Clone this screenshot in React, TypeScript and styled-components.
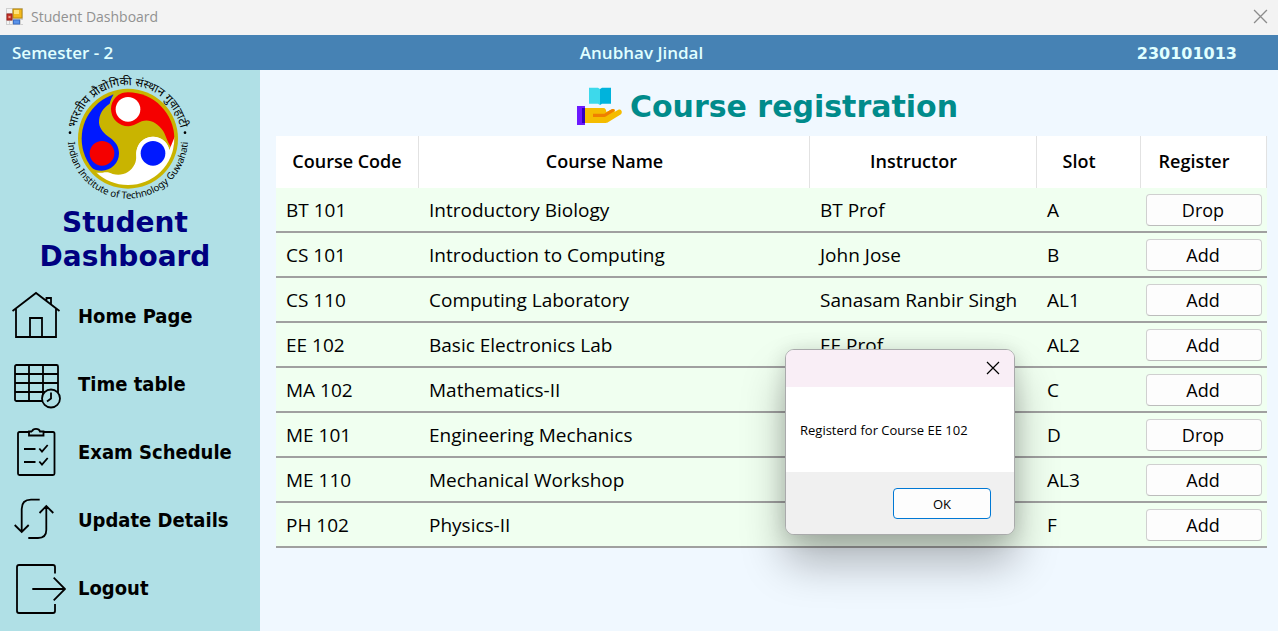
import React from "react";
import styled, { createGlobalStyle } from "styled-components";

const humanist = '"Open Sans", "Noto Sans", sans-serif';
const wide = '"DejaVu Sans", Verdana, sans-serif';
const compact = '"DejaVu Sans Condensed", Tahoma, sans-serif';

const GlobalStyle = createGlobalStyle`
  *, *::before, *::after { box-sizing: border-box; }
  body { margin: 0; font-family: ${humanist}; color: #000; background: #f0f8ff; }
  button { font-family: inherit; color: inherit; cursor: pointer; }
  h1, h2, p { margin: 0; }
`;

const Window = styled.div`
  position: relative;
  display: flex;
  flex-direction: column;
  min-height: 100vh;
`;

const TitleBar = styled.div`
  display: flex;
  align-items: center;
  gap: 8px;
  height: 35px;
  padding: 0 10px 3px 6px;
  background: #f3f3f3;
  color: #919191;
  font-size: 14px;
`;

const WindowTitle = styled.span`
  flex: 1;
`;

const CloseButton = styled.button`
  display: flex;
  padding: 0;
  border: 0;
  background: none;
`;

const InfoBar = styled.header`
  display: grid;
  grid-template-columns: 1fr auto 1fr;
  align-items: center;
  height: 35px;
  padding: 0 41px 0 12px;
  background: #4682b4;
  color: #e0ffff;
  font-size: 17px;
  font-weight: 600;
`;

const StudentName = styled.span`
  padding-left: 34px;
`;

const RollNumber = styled.span`
  justify-self: end;
  padding-top: 1px;
  font-family: ${wide};
  font-size: 16px;
  font-weight: 700;
`;

const Body = styled.div`
  display: flex;
  flex: 1;
`;

const Sidebar = styled.aside`
  flex: none;
  width: 260px;
  background: #b0e0e6;
`;

const Brand = styled.div`
  display: flex;
  flex-direction: column;
  align-items: center;
  gap: 4px;
  padding-right: 10px;
`;

const BrandTitle = styled.h1`
  color: #000080;
  font-family: ${wide};
  font-size: 28px;
  line-height: 34px;
  text-align: center;
`;

const Nav = styled.nav`
  display: flex;
  flex-direction: column;
  padding-top: 8px;
`;

const NavButton = styled.button`
  display: flex;
  align-items: center;
  gap: 12px;
  height: 68px;
  padding: 0 0 0 12px;
  border: 0;
  background: none;
  font-family: ${compact};
  font-size: 20px;
  font-weight: 700;
  text-align: left;
`;

const Main = styled.main`
  flex: 1;
  min-width: 0;
  padding: 16px 11px 40px 16px;
  background: #f0f8ff;
`;

const Heading = styled.h2`
  display: flex;
  align-items: center;
  justify-content: center;
  gap: 7px;
  height: 50px;
  padding: 0 8px 10px 0;
  color: #008b8b;
  font-family: ${wide};
  font-size: 30px;
`;

const Table = styled.table`
  width: 100%;
  table-layout: fixed;
  border-collapse: separate;
  border-spacing: 0;
`;

const Column = styled.col<{ $width?: number }>`
  width: ${(p) => (p.$width ? `${p.$width}px` : "auto")};
`;

const HeadCell = styled.th`
  height: 52px;
  padding: 0 0 2px;
  border-right: 1px solid #e2e2e2;
  background: #fff;
  font-size: 18px;
  font-weight: 600;
  & + & { padding-right: 19px; }
`;

const Cell = styled.td`
  height: 45px;
  padding: 0 0 0 10px;
  border-bottom: 2px solid #a0a0a0;
  background: #f0fff0;
  font-size: 19px;
  line-height: 24px;
  white-space: nowrap;
`;

const ActionCell = styled(Cell)`
  padding: 0 5px;
`;

const ActionButton = styled.button`
  display: block;
  width: 100%;
  height: 32px;
  padding: 0 2px 0 0;
  border: 1px solid #d0d0d0;
  border-bottom-color: #bcbcbc;
  border-radius: 4px;
  background: #fdfdfd;
  font-size: 18px;
  line-height: 24px;
`;

const Dialog = styled.div`
  position: absolute;
  top: 349px;
  left: 785px;
  width: 230px;
  overflow: hidden;
  border: 1px solid #a9aaab;
  border-radius: 9px;
  background: #fff;
  box-shadow: 0 28px 44px rgba(0, 0, 0, 0.28), 0 2px 20px rgba(0, 0, 0, 0.14);
  font-size: 13px;
`;

const DialogTitle = styled.div`
  display: flex;
  align-items: center;
  justify-content: flex-end;
  height: 37px;
  padding: 0 14px 1px 0;
  background: #f9eef6;
`;

const DialogText = styled.p`
  height: 85px;
  padding: 0 14px;
  line-height: 87px;
  white-space: nowrap;
`;

const DialogFooter = styled.div`
  display: flex;
  justify-content: flex-end;
  padding: 16px 23px 15px;
  background: #f0f0f0;
`;

const OkButton = styled.button`
  width: 98px;
  height: 31px;
  border: 1px solid #0078d4;
  border-radius: 4px;
  background: #fdfdfd;
  font-size: 13px;
`;

const FormIcon = () => (
  <svg width="17" height="17" viewBox="0 0 17 17" aria-hidden="true">
    <rect width="17" height="17" fill="#cfcfcf" />
    <path d="M1 1h5v4H1zM1 13h2v3H1zM4 13h2v3H4zM15 12h2v4h-2z" fill="#f4f4f4" />
    <rect x="7" y="1" width="9" height="9" fill="#f3b91d" stroke="#b88a10" />
    <rect x="8" y="2" width="5" height="4" fill="#ffe27a" />
    <rect x="1" y="6" width="5" height="6" fill="#c8352a" stroke="#9c1f18" />
    <rect x="2.5" y="8" width="2" height="2" fill="#ee9a8c" />
    <rect x="7.5" y="12" width="6" height="4" fill="#5a93ea" stroke="#3c6fc4" />
  </svg>
);

const Cross = ({ size, color }: { size: number; color: string }) => (
  <svg width={size} height={size} viewBox="0 0 14 14" fill="none" stroke={color} strokeWidth="1.2" aria-hidden="true">
    <path d="M1 1l12 12M13 1L1 13" />
  </svg>
);

const Emblem = () => (
  <svg width="136" height="132" viewBox="21 0 408 396" role="img" aria-label="Indian Institute of Technology Guwahati">
    <defs>
      <path id="arcTop" d="M74 206A160 160 0 0 1 394 206" />
      <path id="arcBottom" d="M54 206A180 180 0 1 0 414 206" />
      <clipPath id="disc"><circle cx="234" cy="206" r="139" /></clipPath>
    </defs>
    <circle cx="234" cy="206" r="150" fill="#c9b400" />
    <g clipPath="url(#disc)">
      <path d="M190 60L190 75C184 84 182 91 179 101C158 115 147 132 147 158C149 178 163 191 180 203C197 215 207 230 207 250A52 52 0 0 1 155 302C130 302 115 290 105 270L60 270V60Z" fill="#0019ff" />
      <path d="M234 60H400V240H371C352 222 349 197 339 182C322 158 298 146 275 154C262 159 252 168 235 169A52 52 0 0 1 183 117C183 90 204 66 234 66Z" fill="#f50000" />
      <path d="M374 200L358 240A50 50 0 0 0 260 240C256 255 262 265 254 283C242 308 215 320 188 312C178 306 168 306 158 308L130 308V360H390V200Z" fill="#fff" />
      <circle cx="309" cy="250" r="50" fill="#fff" />
    </g>
    <circle cx="234" cy="118" r="37" fill="#fff" />
    <circle cx="156" cy="250" r="37" fill="#f50000" />
    <circle cx="309" cy="250" r="37" fill="#0019ff" />
    <circle cx="60" cy="188" r="4" />
    <circle cx="405" cy="188" r="4" />
    <text fontFamily='"Noto Sans Devanagari", "Noto Sans", sans-serif' fontSize="35" textAnchor="middle">
      <textPath href="#arcTop" startOffset="50%">भारतीय प्रौद्योगिकी संस्थान गुवाहाटी</textPath>
    </text>
    <text fontFamily='"Noto Sans", sans-serif' fontSize="29" textAnchor="middle">
      <textPath href="#arcBottom" startOffset="50%">Indian Institute of Technology Guwahati</textPath>
    </text>
  </svg>
);

const CourseIcon = () => (
  <svg width="46" height="40" viewBox="54 150 138 120" aria-hidden="true">
    <path d="M90 155H117L123 159V207L117 203H90Z" fill="#3dd9eb" />
    <path d="M156 155H129L123 159V207L129 203H156Z" fill="#00b3dc" />
    <path d="M78 216H133C139 216 142 222 142 228L160 220C166 217 171 222 166 228L178 221C186 218 192 227 186 235L147 259C144 261 141 261 138 261H78Z" fill="#f5bc00" />
    <path d="M102 233H136L155 221C162 217 169 221 166 226L143 240C140 242 138 243 134 243H102Z" fill="#f07f00" />
    <path d="M54 210H78V267H54Z" fill="#6c19ff" />
    <path d="M69 216H78V261H69Z" fill="#3200c0" />
  </svg>
);

const LineIcon = ({ children }: { children: React.ReactNode }) => (
  <svg width="54" height="52" viewBox="0 0 54 52" fill="none" stroke="#000" strokeWidth="1.8" aria-hidden="true">
    {children}
  </svg>
);

const navItems = [
  {
    label: "Home Page",
    icon: <path d="M0.5 21L24 3L47.5 21M4 18.5V47H44V18.5M18 47V28H30V47M34.5 10.5V8H39V14.5" />,
  },
  {
    label: "Time table",
    icon: (
      <>
        <rect x="3" y="7" width="43" height="36" rx="1.5" />
        <path d="M17 7V43M31 7V43M3 16H46M3 25H46M3 34H46" />
        <circle cx="39" cy="40.5" r="9" fill="#b0e0e6" />
        <path d="M39 34.5V40.5L35 43.5" />
      </>
    ),
  },
  {
    label: "Exam Schedule",
    icon: (
      <>
        <path d="M17 6H7.5Q6 6 6 7.5V47.5Q6 49 7.5 49H41Q42.5 49 42.5 47.5V7.5Q42.5 6 41 6H31.5" />
        <path d="M20 5.5H17V9.5H31.5V5.5H28C27 2 21 2 20 5.5" />
        <path d="M12 23H23.5M12 36H23.5M27.3 22.5L30 25.7L35.7 19M27.3 35.5L30 38.7L35.7 32" />
      </>
    ),
  },
  {
    label: "Update Details",
    icon: (
      <path d="M27.7 5.7H19Q9.7 5.7 9.7 15V37.5M2.7 31L9.7 38L16.7 31M16.3 44H26Q34.3 44 34.3 36V12.5M27.5 19L34.3 12L41.3 19" />
    ),
  },
  {
    label: "Logout",
    icon: (
      <path d="M43 11.5V5Q43 3 41 3H7Q5 3 5 5V49Q5 51 7 51H41Q43 51 43 49V42M20.3 27H53M41.7 15.7L53 27L41.7 38.3" />
    ),
  },
];

const courses = [
  { code: "BT 101", name: "Introductory Biology", instructor: "BT Prof", slot: "A", registered: true },
  { code: "CS 101", name: "Introduction to Computing", instructor: "John Jose", slot: "B", registered: false },
  { code: "CS 110", name: "Computing Laboratory", instructor: "Sanasam Ranbir Singh", slot: "AL1", registered: false },
  { code: "EE 102", name: "Basic Electronics Lab", instructor: "EE Prof", slot: "AL2", registered: false },
  { code: "MA 102", name: "Mathematics-II", instructor: "", slot: "C", registered: false },
  { code: "ME 101", name: "Engineering Mechanics", instructor: "", slot: "D", registered: true },
  { code: "ME 110", name: "Mechanical Workshop", instructor: "", slot: "AL3", registered: false },
  { code: "PH 102", name: "Physics-II", instructor: "", slot: "F", registered: false },
];

export default function App() {
  return (
    <Window>
      <GlobalStyle />
      <TitleBar>
        <FormIcon />
        <WindowTitle>Student Dashboard</WindowTitle>
        <CloseButton aria-label="Close window"><Cross size={15} color="#8c8c8c" /></CloseButton>
      </TitleBar>
      <InfoBar>
        <span>Semester - 2</span>
        <StudentName>Anubhav Jindal</StudentName>
        <RollNumber>230101013</RollNumber>
      </InfoBar>
      <Body>
        <Sidebar>
          <Brand>
            <Emblem />
            <BrandTitle>Student<br />Dashboard</BrandTitle>
          </Brand>
          <Nav>
            {navItems.map((item) => (
              <NavButton key={item.label}>
                <LineIcon>{item.icon}</LineIcon>
                {item.label}
              </NavButton>
            ))}
          </Nav>
        </Sidebar>
        <Main>
          <Heading><CourseIcon />Course registration</Heading>
          <Table>
            <colgroup>
              <Column $width={143} />
              <Column />
              <Column $width={227} />
              <Column $width={104} />
              <Column $width={126} />
            </colgroup>
            <thead>
              <tr>
                <HeadCell>Course Code</HeadCell>
                <HeadCell>Course Name</HeadCell>
                <HeadCell>Instructor</HeadCell>
                <HeadCell>Slot</HeadCell>
                <HeadCell>Register</HeadCell>
              </tr>
            </thead>
            <tbody>
              {courses.map((c) => (
                <tr key={c.code}>
                  <Cell>{c.code}</Cell>
                  <Cell>{c.name}</Cell>
                  <Cell>{c.instructor}</Cell>
                  <Cell>{c.slot}</Cell>
                  <ActionCell><ActionButton>{c.registered ? "Drop" : "Add"}</ActionButton></ActionCell>
                </tr>
              ))}
            </tbody>
          </Table>
        </Main>
      </Body>
      <Dialog role="dialog" aria-label="Registration message">
        <DialogTitle>
          <CloseButton aria-label="Close"><Cross size={14} color="#000" /></CloseButton>
        </DialogTitle>
        <DialogText>Registerd for Course EE 102</DialogText>
        <DialogFooter><OkButton>OK</OkButton></DialogFooter>
      </Dialog>
    </Window>
  );
}
